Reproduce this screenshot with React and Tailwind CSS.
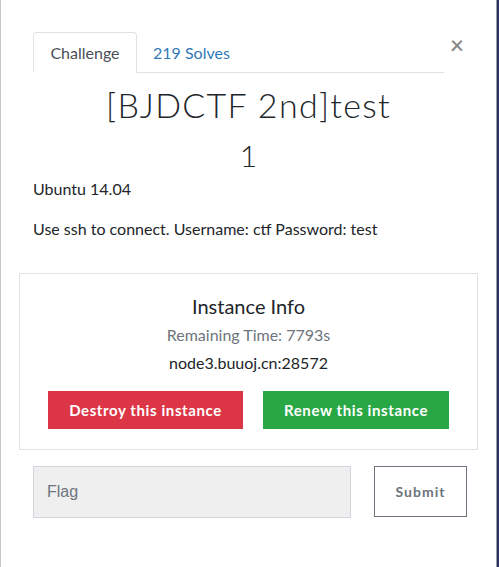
import React, { useState } from "react";

export default function App() {
  const [tab, setTab] = useState("challenge");
  const [flag, setFlag] = useState("");

  return (
    <div className="w-[499px] h-[567px] flex bg-[#2b2f63] overflow-hidden">
      {/* MODAL */}
      <div
        className="w-[497px] h-full bg-white border-l border-[#c8c8c8] border-r border-r-[#9aa0a6] text-[#212529]"
        style={{ fontFamily: "Lato, 'Liberation Sans', sans-serif" }}
      >
        <div className="pt-[32px] px-[32px] flex items-start">
          <div className="flex-1 flex border-b border-[#dee2e6] h-[41px] mr-[-12px] w-[420px]">
            <button
              onClick={() => setTab("challenge")}
              className="h-[41px] w-[104px] mb-[-1px] border border-[#dee2e6] border-b-white rounded-t-[4px] bg-white text-[16px] text-[#495057]"
            >
              Challenge
            </button>
            <button
              onClick={() => setTab("solves")}
              className="h-[41px] px-[16px] text-[16px] text-[#337ab7]"
            >
              219 Solves
            </button>
          </div>
          <button className="mt-[1px] ml-[18px] text-[#888888] text-[24px] leading-none font-semibold">
            ×
          </button>
        </div>

        <div className="px-[32px]">
          <div className="text-center mt-[12px] text-[#212529] font-light">
            <div className="text-[34px] leading-[40px] tracking-[1.3px]">
              [BJDCTF 2nd]test
            </div>
            <div className="text-[30px] leading-[36px] mt-[12px]">1</div>
          </div>

          <div className="mt-[5px] text-[16px] leading-[22px]">
            <p>Ubuntu 14.04</p>
            <p className="mt-[18px]">Use ssh to connect. Username: ctf Password: test</p>
          </div>
        </div>

        {/* INSTANCE INFO */}
        <div className="mx-[18px] mt-[33px] h-[177px] border border-[#dee2e6] pt-[18px] text-center">
          <div className="text-[20px] leading-[28px]">Instance Info</div>
          <div className="text-[16px] leading-[22px] text-[#6c757d] mt-[4px]">
            Remaining Time: 7793s
          </div>
          <div className="text-[16px] leading-[22px] mt-[6px]">node3.buuoj.cn:28572</div>
          <div className="mt-[17px] flex justify-center gap-[20px]">
            <button className="w-[195px] h-[38px] bg-[#dc3545] text-white text-[15px] font-bold tracking-[0.6px]">
              Destroy this instance
            </button>
            <button className="w-[186px] h-[38px] bg-[#28a745] text-white text-[15px] font-bold tracking-[0.6px]">
              Renew this instance
            </button>
          </div>
        </div>

        {/* FLAG */}
        <div className="mt-[16px] pl-[32px] flex items-start">
          <input
            value={flag}
            onChange={(e) => setFlag(e.target.value)}
            placeholder="Flag"
            className="shrink-0 w-[318px] h-[52px] bg-[#efefef] border border-[#ced4da] px-[13px] text-[16px] placeholder:text-[#6c757d] outline-none"
            style={{ fontFamily: "'Liberation Sans', Arial, sans-serif" }}
          />
          <button className="shrink-0 ml-[23px] w-[93px] h-[51px] border border-[#6c757d] text-[#6c757d] text-[14px] font-bold tracking-[1px]">
            Submit
          </button>
        </div>
      </div>
    </div>
  );
}
